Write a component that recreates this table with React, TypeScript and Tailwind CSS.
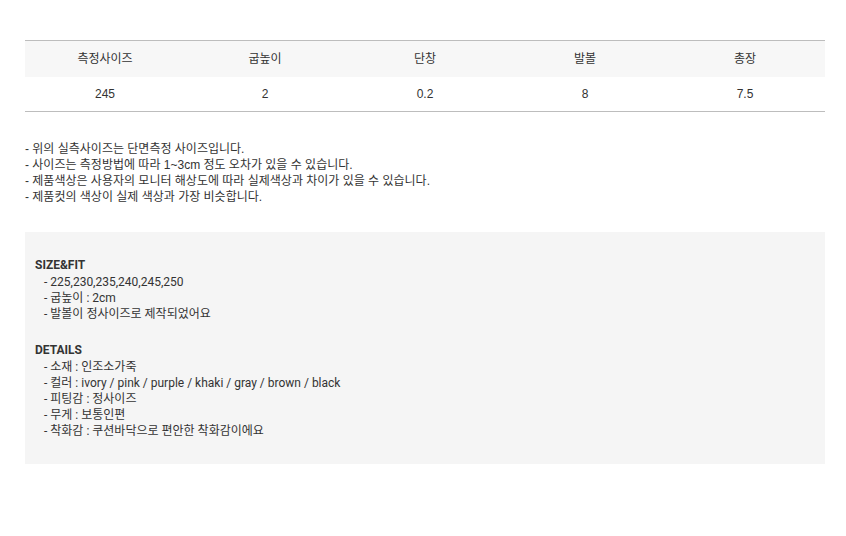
import React from 'react';

const headers = ['측정사이즈', '굽높이', '단창', '발볼', '총장'];
const values = ['245', '2', '0.2', '8', '7.5'];

const notes = [
  '- 위의 실측사이즈는 단면측정 사이즈입니다.',
  '- 사이즈는 측정방법에 따라 1~3cm 정도 오차가 있을 수 있습니다.',
  '- 제품색상은 사용자의 모니터 해상도에 따라 실제색상과 차이가 있을 수 있습니다.',
  '- 제품컷의 색상이 실제 색상과 가장 비슷합니다.',
];

const sizeFit = ['- 225,230,235,240,245,250', '- 굽높이 : 2cm', '- 발볼이 정사이즈로 제작되었어요'];
const details = [
  '- 소재 : 인조소가죽',
  '- 컬러 : ivory / pink / purple / khaki / gray / brown / black',
  '- 피팅감 : 정사이즈',
  '- 무게 : 보통인편',
  '- 착화감 : 쿠션바닥으로 편안한 착화감이에요',
];

export default function App() {
  return (
    <div className="w-[846px] h-[536px] bg-white px-[25px] pt-[40px] text-[#333] font-['Liberation_Sans','Noto_Sans_CJK_KR',sans-serif]">
      {/* size table */}
      <div className="w-[800px] border-t border-b border-[#bdbdbd]">
        <div className="grid grid-cols-5 h-[36px] bg-[#f7f7f7] items-center text-[12px]">
          {headers.map(h => (
            <div key={h} className="text-center">{h}</div>
          ))}
        </div>
        <div className="grid grid-cols-5 h-[34px] items-center text-[12px]">
          {values.map((v, i) => (
            <div key={i} className="text-center">{v}</div>
          ))}
        </div>
      </div>

      <div className="mt-[29px] text-[12px] leading-4">
        {notes.map(n => (
          <div key={n}>{n}</div>
        ))}
      </div>

      {/* size & fit box */}
      <div className="mt-[27px] w-[800px] h-[232px] bg-[#f5f5f5] pl-[10px] pt-[24px] text-[12px] font-['Roboto','Noto_Sans_CJK_KR',sans-serif]">
        <div className="font-bold leading-[18px]">SIZE&amp;FIT</div>
        <div className="pl-[9px] leading-4">
          {sizeFit.map(s => (
            <div key={s}>{s}</div>
          ))}
        </div>
        <div className="mt-[19px] font-bold leading-[18px]">DETAILS</div>
        <div className="pl-[9px] leading-4">
          {details.map(d => (
            <div key={d}>{d}</div>
          ))}
        </div>
      </div>
    </div>
  );
}
